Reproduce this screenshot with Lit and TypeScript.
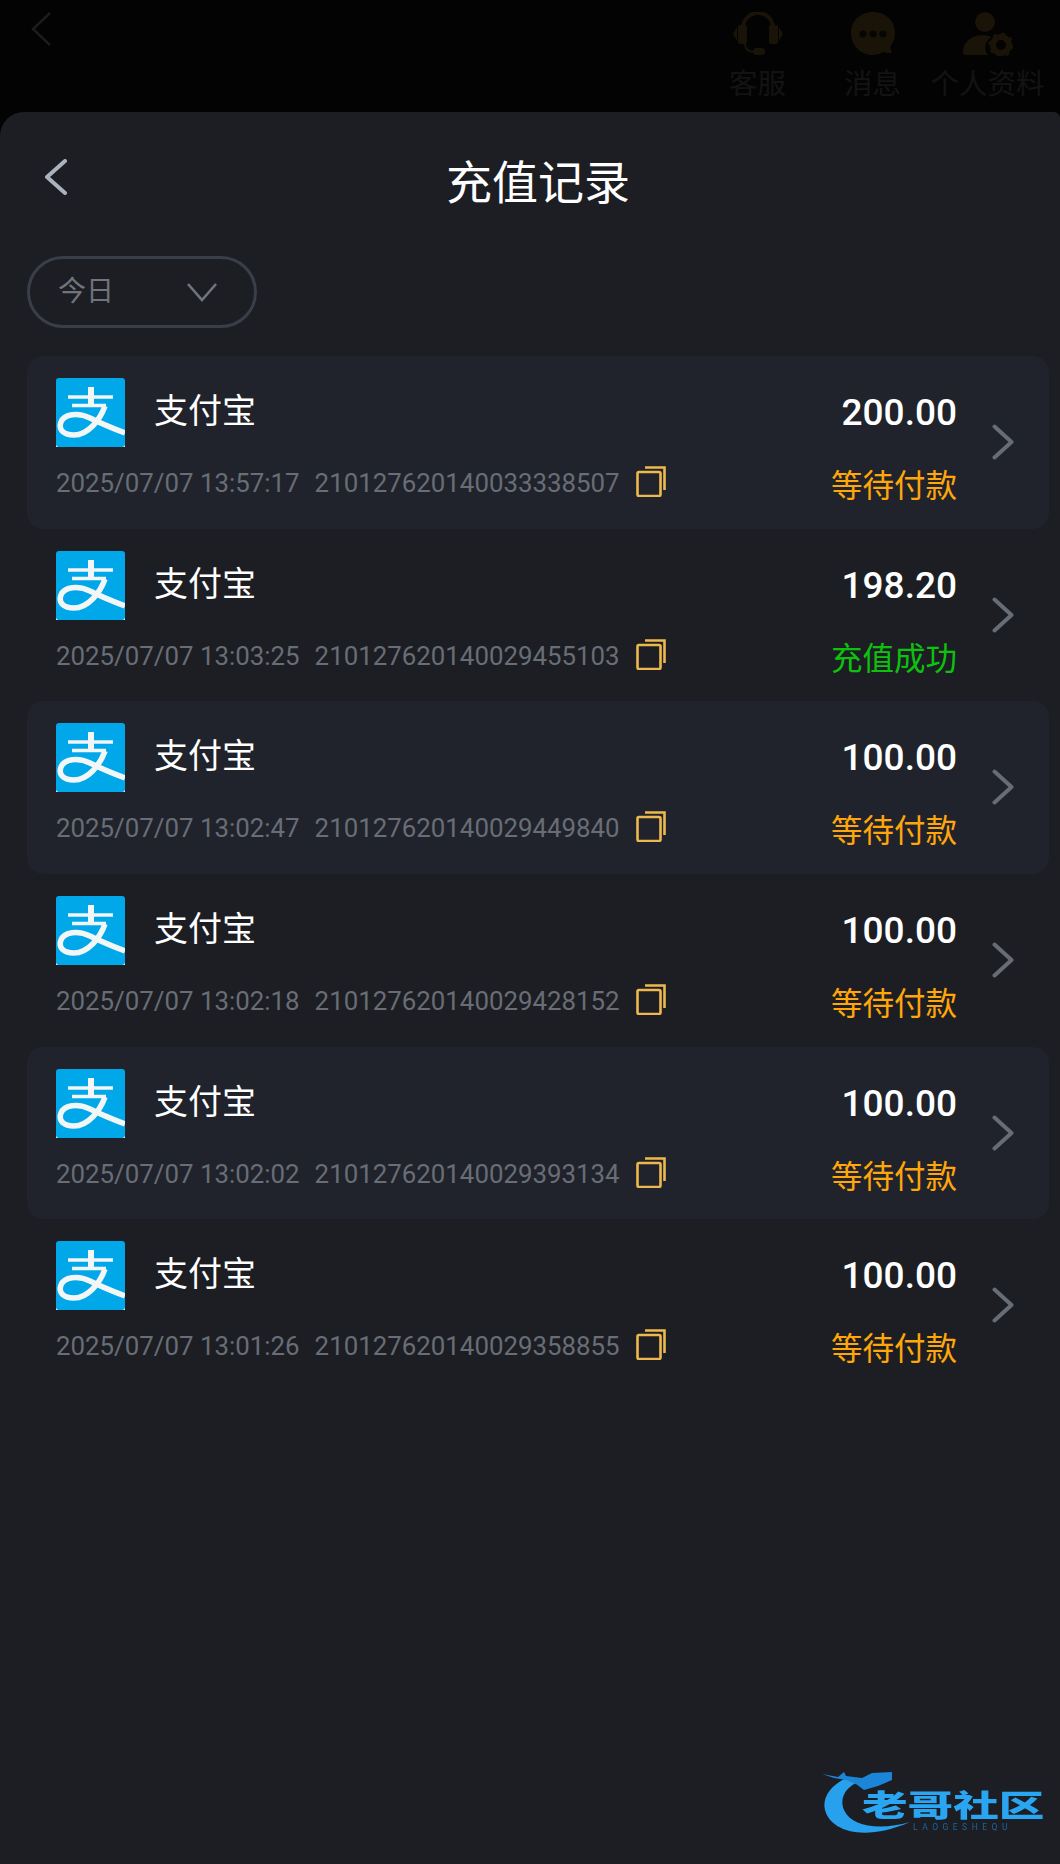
import { LitElement, html, css } from "lit";
import { customElement } from "lit/decorators.js";

const rows = [
  { t: "2025/07/07 13:57:17", n: "210127620140033338507", a: "200.00", s: "等待付款", ok: false },
  { t: "2025/07/07 13:03:25", n: "210127620140029455103", a: "198.20", s: "充值成功", ok: true },
  { t: "2025/07/07 13:02:47", n: "210127620140029449840", a: "100.00", s: "等待付款", ok: false },
  { t: "2025/07/07 13:02:18", n: "210127620140029428152", a: "100.00", s: "等待付款", ok: false },
  { t: "2025/07/07 13:02:02", n: "210127620140029393134", a: "100.00", s: "等待付款", ok: false },
  { t: "2025/07/07 13:01:26", n: "210127620140029358855", a: "100.00", s: "等待付款", ok: false },
];

const alipay = html`<svg class="pay" viewBox="0 0 69 69">
  <rect y="40" width="69" height="29" fill="#f4f7f7"/>
  <rect width="69" height="69" rx="3" fill="#00a8ea"/>
  <g fill="none" stroke="#f2f6f6">
    <path d="M12 19H57" stroke-width="3.6"/>
    <path d="M16 27.500H50" stroke-width="3.6"/>
    <path d="M32 9L38 9L38 28L32 28Z" fill="#f2f6f6" stroke="none"/>
    <path d="M49 28C44 42 32 57 18 57C8 57 2 52 5 44C8 36 22 34 34 40C44 45 56 50 69 55" stroke-width="5.500"/>
  </g>
</svg>`;

const copy = html`<svg class="copy" viewBox="0 0 30 31" fill="none" stroke="#edb94f" stroke-width="2.6">
  <rect x="1.500" y="6" width="23" height="24" rx="1.500"/>
  <path d="M9 1.500H28.500V24"/>
</svg>`;

const chev = html`<svg class="chev" viewBox="0 0 22 36" fill="none" stroke="#676c75" stroke-width="4" stroke-linecap="round" stroke-linejoin="round">
  <path d="M2.500 2.500L19.500 18L2.500 33.500"/>
</svg>`;

@customElement("app-root")
export class AppRoot extends LitElement {
  static styles = css`
    :host { display: block; width: 1060px; height: 1864px; background: #030303; overflow: hidden;
      font-family: "Roboto", "Noto Sans CJK SC", sans-serif; position: relative; }
    .top { height: 112px; display: flex; box-sizing: border-box; padding: 12px 15px 0 30px; }
    .top .back { width: 24px; height: 34px; }
    .tools { margin-left: auto; display: flex; }
    .tool { width: 115px; display: flex; flex-direction: column; align-items: center; color: #131313;
      font-size: 28.500px; line-height: 34px; font-family: "Noto Sans CJK SC", sans-serif; white-space: nowrap; }
    .tool svg { width: 50px; height: 44px; margin-bottom: 9px; }
    .sheet { height: 1752px; background: #1c1e23; border-radius: 24px 6px 0 0; position: relative; padding: 0 11px 0 27px; box-sizing: border-box; }
    .head { height: 144px; display: flex; align-items: center; justify-content: center; position: relative; padding-bottom: 10px; box-sizing: border-box; }
    .head h1 { margin: 0; font-size: 46px; font-weight: 400; color: #fff; font-family: "Noto Sans CJK SC", sans-serif; line-height: 60px; }
    .head svg { position: absolute; left: 17px; top: 47px; width: 24px; height: 36px; }
    .pill { box-sizing: border-box; width: 230px; height: 72px; border: 3px solid #393e49; border-radius: 36px; display: flex; align-items: center;
      padding: 0 37px 0 28px; justify-content: space-between; color: #6f747d; font-size: 28px; font-family: "Noto Sans CJK SC", sans-serif; }
    .pill span { margin-top: -6px; }
    .pill svg { width: 30px; height: 20px; }
    .list { margin-top: 28px; }
    .row { box-sizing: border-box; height: 172.700px; border-radius: 16px; display: flex; padding: 0 0 0 29px; align-items: stretch; }
    .row:nth-child(odd) { background: #20232b; }
    .main { flex: 1; display: flex; flex-direction: column; padding-top: 22px; }
    .r1 { display: flex; align-items: center; gap: 29px; height: 69px; }
    .pay { width: 69px; height: 69px; display: block; filter: blur(.3px); }
    .name { color: #fff; font-size: 34px; line-height: 50px; margin-top: -7px; font-family: "Noto Sans CJK SC", sans-serif; }
    .r2 { display: flex; align-items: center; margin-top: 16px; height: 40px; color: #686d76; font-size: 25.850px; }
    .r2 .num { margin-left: 15px; }
    .copy { width: 30px; height: 31px; margin-left: 16px; margin-top: -3px; flex: none; }
    .side { display: flex; flex-direction: column; align-items: flex-end; padding-top: 22px; width: 200px; }
    .amt { color: #fff; font-size: 37px; font-weight: 500; line-height: 70px; }
    .st { font-size: 31.500px; line-height: 44px; margin-top: 13px; color: #ffa60a; font-family: "Noto Sans CJK SC", sans-serif; }
    .st.ok { color: #0fc10f; }
    .chev { width: 22px; height: 36px; margin: 68px 35px 0 35px; flex: none; }
    .mark { position: absolute; left: 822px; top: 1768px; width: 226px; height: 74px; filter: blur(.6px); }
    .mark svg { position: absolute; left: 0; top: 0; width: 100px; height: 74px; }
    .mark b { position: absolute; left: 40px; top: 19px; font-size: 30px; line-height: 32px; font-weight: 900; color: #29a5f2;
      font-family: "Noto Sans CJK SC", sans-serif; white-space: nowrap; transform: scaleX(1.520); transform-origin: left center; }
    .mark i { position: absolute; left: 91px; top: 54px; font-size: 8.500px; line-height: 10px; font-style: normal; color: #1c659f; letter-spacing: 4.500px; white-space: nowrap; }
  `;

  render() {
    return html`
      <div class="top">
        <svg class="back" viewBox="0 0 24 34" fill="none" stroke="#1c1c1c" stroke-width="2.500"><path d="M20 1L3 17L20 33"/></svg>
        <div class="tools">
          <div class="tool"><svg viewBox="0 0 50 44" fill="#1a1307">
            <path d="M10 16A15 15 0 0 1 40 16" fill="none" stroke="#1a1307" stroke-width="4"/>
            <rect x="5" y="13" width="9" height="19" rx="2"/><rect x="36" y="13" width="9" height="19" rx="2"/>
            <path d="M0 22L4 15V29ZM50 22L46 15V29Z"/>
            <path d="M12 32C12 38 16 40 22 40" fill="none" stroke="#1a1307" stroke-width="2"/>
            <rect x="20" y="36" width="12" height="7" rx="3.500"/></svg>客服</div>
          <div class="tool"><svg viewBox="0 0 50 44" fill="#1a1307">
            <path d="M25 0C38 0 47 9 47 21C47 27 45 31 42 35L44 41C40 41 37 41 35 40C32 42 29 43 25 43C12 43 3 33 3 21C3 9 12 0 25 0Z"/>
            <circle cx="15" cy="22" r="3.500" fill="#060606"/><circle cx="25" cy="22" r="3.500" fill="#060606"/><circle cx="35" cy="22" r="3.500" fill="#060606"/></svg>消息</div>
          <div class="tool"><svg viewBox="0 0 50 44" fill="#1a1307">
            <circle cx="22" cy="10" r="10"/>
            <path d="M0 41C0 30 8 23 20 23C24 23 27 24 28 25C22 30 20 36 25 43H3C1 43 0 42 0 41Z"/>
            <circle cx="38" cy="33" r="8" fill="none" stroke="#1a1307" stroke-width="6"/>
            <circle cx="38" cy="33" r="11" fill="none" stroke="#1a1307" stroke-width="3" stroke-dasharray="4 4.600"/></svg>个人资料</div>
        </div>
      </div>
      <div class="sheet">
        <div class="head">
          <svg viewBox="0 0 24 36" fill="none" stroke="#aab2bf" stroke-width="4" stroke-linecap="round" stroke-linejoin="round"><path d="M21 2L3 18L21 34"/></svg>
          <h1>充值记录</h1>
        </div>
        <div class="pill"><span>今日</span>
          <svg viewBox="0 0 30 20" fill="none" stroke="#6f747d" stroke-width="2.600"><path d="M1 2L15 18L29 2"/></svg>
        </div>
        <div class="list">
          ${rows.map(r => html`<div class="row">
            <div class="main">
              <div class="r1">${alipay}<span class="name">支付宝</span></div>
              <div class="r2"><span>${r.t}</span><span class="num">${r.n}</span>${copy}</div>
            </div>
            <div class="side"><span class="amt">${r.a}</span><span class="st ${r.ok ? "ok" : ""}">${r.s}</span></div>
            ${chev}
          </div>`)}
        </div>
      </div>
      <div class="mark">
        <svg viewBox="0 0 100 74" fill="none">
          <path d="M24 10C8 18 0 30 3 42C8 62 40 75 88 54C60 62 30 60 22 42C17 30 24 20 34 15Z" fill="#27a0ee"/>
          <path d="M0 6L16 9L22 4L24 8L40 10L50 5L70 4L70 12L56 18L42 22L34 16L24 12L12 10Z" fill="#1b86d8"/>
        </svg>
        <b>老哥社区</b>
        <i>LAOGESHEQU</i>
      </div>
    `;
  }
}
